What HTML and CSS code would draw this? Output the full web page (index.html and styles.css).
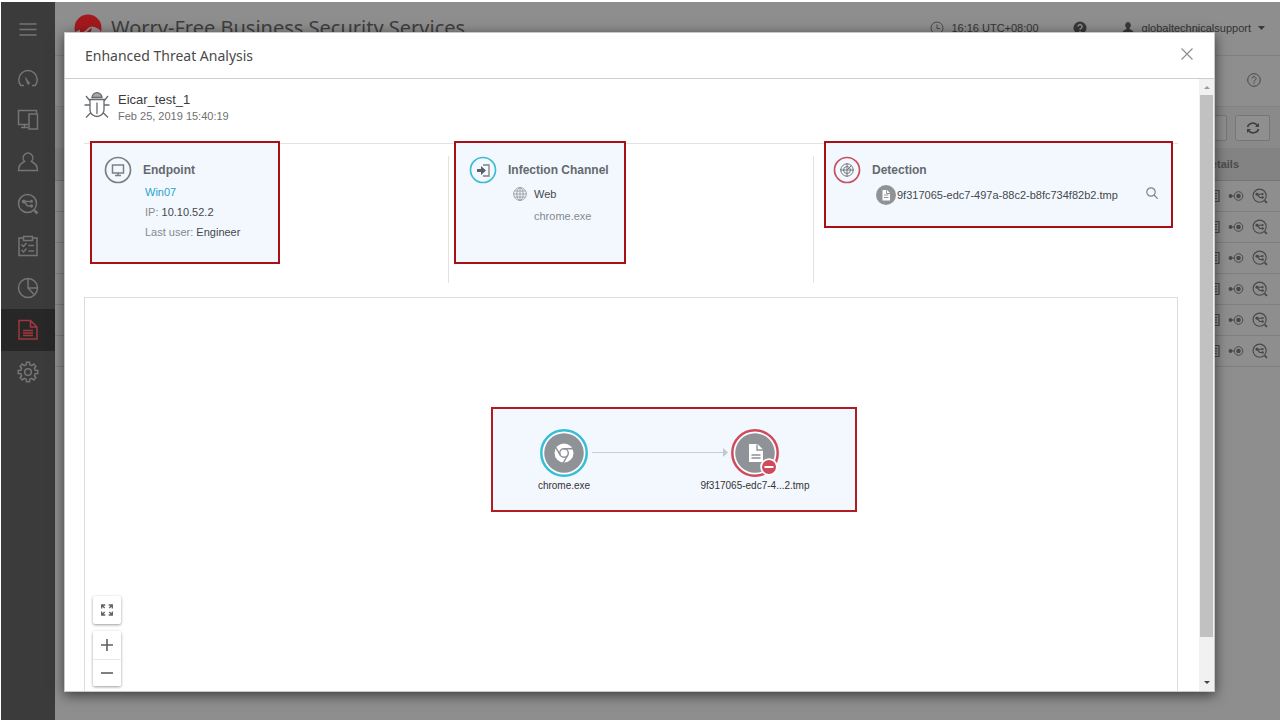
FILE: index.html
```html
<!DOCTYPE html>
<html lang="en">
<head>
<meta charset="utf-8">
<title>Worry-Free Business Security Services</title>
<link rel="stylesheet" href="styles.css">
</head>
<body>
<svg class="defs" aria-hidden="true">
  <symbol id="i-analysis" viewBox="0 0 22 22"><g fill="none" stroke="currentColor" stroke-width="1.500"><circle cx="10.500" cy="10.500" r="9"/><path d="M7 8.500h7.500M7 8.500l3.500 4.500h4"/><path d="M17.500 17.500l3 3" stroke-width="2.500"/></g><g fill="currentColor"><circle cx="6.800" cy="8.500" r="2"/><circle cx="14.500" cy="8.300" r="1.500"/><circle cx="14.500" cy="13" r="1.700"/></g></symbol>
  <symbol id="i-detail" viewBox="0 0 16 12"><g fill="none" stroke="currentColor"><circle cx="10.500" cy="6" r="4.300"/><path d="M2 6h4"/></g><g fill="currentColor"><circle cx="10.500" cy="6" r="2.300"/><circle cx="2.500" cy="6" r="1.900"/></g></symbol>
  <symbol id="i-list" viewBox="0 0 12 14"><path d="M1 1.500h10v11H1zM3 4.500h6M3 7h6M3 9.500h6" fill="none" stroke="currentColor" stroke-width="1.200"/></symbol>
</svg>
<div class="app">
  <nav class="sidebar" aria-label="Main">
    <button class="side-item side-menu" aria-label="Menu"><svg viewBox="0 0 22 22"><path d="M2.500 5h17M2.500 10.500h17M2.500 16h17"/></svg></button>
    <button class="side-item" aria-label="Dashboard"><svg viewBox="0 0 22 22"><path d="M7 18.500H3.800A9.200 9.200 0 1 1 18.200 18.500H15"/><path d="M8.500 10.500l2 6.500a1.200 1.200 0 0 0 2-1z" fill="currentColor" stroke-width="0.800"/></svg></button>
    <button class="side-item" aria-label="Devices"><svg viewBox="0 0 22 22"><path d="M11 15.500H1.500v-14h18V4M4 18.500h7M7.500 15.500v3M12 5h8.500v15H12z"/></svg></button>
    <button class="side-item" aria-label="Users"><svg viewBox="0 0 22 22"><path d="M7.500 10.500a4.800 5 0 1 1 7 0c3.500 1.500 6 4.500 6 9h-19c0-4.500 2.500-7.500 6-9z"/></svg></button>
    <button class="side-item" aria-label="Threat analysis"><svg><use href="#i-analysis"/></svg></button>
    <button class="side-item" aria-label="Policies"><svg viewBox="0 0 22 22"><path d="M6 3H2v17.500h18V3h-4M6.500 1.500h9v4h-9zM4.500 9.500l2 2 3-3.500M4.500 15l2 2 3-3.500M11.500 10.500H17M11.500 16H17"/></svg></button>
    <button class="side-item" aria-label="Reports"><svg viewBox="0 0 22 22"><circle cx="11" cy="11" r="9.500"/><path d="M11 1.500V11h9.500M11 11l6.500 7"/></svg></button>
    <button class="side-item side-active" aria-label="Logs"><svg viewBox="0 0 22 22"><path d="M13.500 1.500H2v18.500h18V8zM13.500 1.500V8H20M6 11.500h10M6 14h10M6 16.500h10"/></svg></button>
    <button class="side-item" aria-label="Settings"><svg viewBox="0 0 22 22"><path d="M9.200 3.800L9.500 1.300h3l.3 2.500 2 .8 2-1.500 2.100 2.100-1.500 2 .8 2 2.500.3v3l-2.500.3-.8 2 1.500 2-2.100 2.100-2-1.500-2 .8-.3 2.500h-3l-.3-2.500-2-.8-2 1.500-2.100-2.100 1.500-2-.8-2-2.500-.3v-3l2.500-.3.8-2-1.500-2 2.100-2.100 2 1.500z"/><circle cx="11" cy="11" r="3.300"/></svg></button>
  </nav>
  <main class="main">
    <header class="topbar">
      <svg class="logo" viewBox="0 0 28 28"><circle cx="14" cy="14" r="13.500" fill="#a3191d"/><path d="M1 18l5-2.500v3.500c6-1 7-5 10-6 4-1 7 1 10 3l1 3c-3-1-6-2-8 1-1 2-3 5-4 8-5 1-10-2-14-10z" fill="#939090"/><path d="M9 21c4-1 5-6 9-7l-3 9z" fill="#a3191d"/></svg>
      <h1 class="brand">Worry-Free Business Security Services</h1>
      <div class="status"><svg viewBox="0 0 14 14"><circle cx="7" cy="7" r="6"/><path d="M7 3.500V7.500h3"/></svg><span>16:16 UTC+08:00</span></div>
      <button class="help" aria-label="Help"><svg viewBox="0 0 14 14"><circle cx="7" cy="7" r="6.500" fill="#383838"/><path d="M5 5.500a2 2 0 1 1 3 1.800q-1 .5-1 1.400M7 10v1.400" fill="none" stroke="#8e8e8e" stroke-width="1.500"/></svg></button>
      <button class="account"><svg viewBox="0 0 14 14"><path d="M7 1a3 3.300 0 0 1 1.600 6v1.200c2 .7 4 1.300 4 3.800H1.400c0-2.500 2-3.100 4-3.800V7A3 3.300 0 0 1 7 1z" fill="#383838"/></svg><span>globaltechnicalsupport</span><svg class="caret" viewBox="0 0 7 4"><path d="M0 0h7L3.500 4z" fill="#383838"/></svg></button>
    </header>
    <div class="subbar"><button class="help" aria-label="Page help"><svg viewBox="0 0 14 14" fill="none" stroke="#484848"><circle cx="7" cy="7" r="6.300"/><path d="M5 5.500a2 2 0 1 1 3 1.800q-1 .5-1 1.400M7 9.600v1.200"/></svg></button></div>
    <div class="toolbar">
      <button class="tool" aria-label="Export"><svg viewBox="0 0 14 14"><path d="M3 2h6v10H3M3 7h5"/></svg></button>
      <button class="tool" aria-label="Refresh"><svg viewBox="0 0 14 14"><path d="M1.500 6A5.500 5 0 0 1 11.500 4.500M12.500 8A5.500 5 0 0 1 2.500 9.500"/><path d="M13 2v4H9zM1 12V8h4z" fill="#404040" stroke="none"/></svg></button>
    </div>
    <table class="logs">
      <thead><tr><th>Details</th></tr></thead>
      <tbody>
        <tr><td><div class="marks"><svg class="m-list"><use href="#i-list"/></svg><svg class="m-detail"><use href="#i-detail"/></svg><svg class="m-analysis"><use href="#i-analysis"/></svg></div></td></tr>
        <tr><td><div class="marks"><svg class="m-list"><use href="#i-list"/></svg><svg class="m-detail"><use href="#i-detail"/></svg><svg class="m-analysis"><use href="#i-analysis"/></svg></div></td></tr>
        <tr><td><div class="marks"><svg class="m-list"><use href="#i-list"/></svg><svg class="m-detail"><use href="#i-detail"/></svg><svg class="m-analysis"><use href="#i-analysis"/></svg></div></td></tr>
        <tr><td><div class="marks"><svg class="m-list"><use href="#i-list"/></svg><svg class="m-detail"><use href="#i-detail"/></svg><svg class="m-analysis"><use href="#i-analysis"/></svg></div></td></tr>
        <tr><td><div class="marks"><svg class="m-list"><use href="#i-list"/></svg><svg class="m-detail"><use href="#i-detail"/></svg><svg class="m-analysis"><use href="#i-analysis"/></svg></div></td></tr>
        <tr><td><div class="marks"><svg class="m-list"><use href="#i-list"/></svg><svg class="m-detail"><use href="#i-detail"/></svg><svg class="m-analysis"><use href="#i-analysis"/></svg></div></td></tr>
      </tbody>
    </table>
  </main>
</div>

<section class="modal" role="dialog" aria-labelledby="modal-title">
  <header class="modal-head">
    <h2 id="modal-title" class="modal-title">Enhanced Threat Analysis</h2>
    <button class="close" aria-label="Close"><svg viewBox="0 0 12 12"><path d="M.5.500l11 11M11.500.500l-11 11" stroke="#8c8c8c" stroke-width="1.100"/></svg></button>
  </header>
  <div class="modal-body">
    <div class="content">
      <div class="threat">
        <svg class="bug" viewBox="0 0 26 28" fill="none" stroke="#666a6e" stroke-width="1.300"><path d="M5.500 8.500h15M6 8.500V19a7 6.500 0 0 0 14 0V8.500M13 11.500V23M0.500 14h5.500M20 14h5.500M2 5l4 5M24 5l-4 5M2 26.500l5-5M24 26.500l-5-5"/><path d="M8 6.500a5 4.800 0 0 1 10 0z" fill="#a5a8aa"/></svg>
        <div>
          <h3 class="threat-name">Eicar_test_1</h3>
          <p class="threat-time">Feb 25, 2019 15:40:19</p>
        </div>
      </div>
      <div class="summary">
        <div class="col">
          <section class="mark mark-endpoint">
            <svg class="ring" viewBox="0 0 28 28" fill="none" stroke="#7b8087"><circle cx="14" cy="14" r="12.500" stroke-width="1.700"/><path d="M8.500 9h11v8h-11zM14 17v2.500M11 19.500h6" stroke-width="1.500"/></svg>
            <div class="info">
              <h4 class="label">Endpoint</h4>
              <p class="line"><a class="link" href="#">Win07</a></p>
              <p class="line">IP: <b class="value">10.10.52.2</b></p>
              <p class="line">Last user: <b class="value">Engineer</b></p>
            </div>
          </section>
        </div>
        <div class="col">
          <section class="mark mark-channel">
            <svg class="ring" viewBox="0 0 28 28" fill="none"><circle cx="14" cy="14" r="12.500" stroke="#3dbcd5" stroke-width="1.700"/><path d="M14 9h6v11h-6" stroke="#7b8087" stroke-width="1.300"/><path d="M8 13h4v-3l5 4.500-5 4.500v-3H8z" fill="#5a5f66"/></svg>
            <div class="info">
              <h4 class="label">Infection Channel</h4>
              <p class="line channel-line"><svg viewBox="0 0 14 14" fill="none" stroke="#8f949a" stroke-width="0.800"><circle cx="7" cy="7" r="6.400"/><ellipse cx="7" cy="7" rx="3.200" ry="6.400"/><path d="M7 .6v12.800M.6 7h12.800M1.500 4h11M1.500 10h11"/></svg><span class="value">Web</span></p>
              <p class="line channel-file">chrome.exe</p>
            </div>
          </section>
        </div>
        <div class="col">
          <section class="mark mark-detection">
            <svg class="ring" viewBox="0 0 28 28" fill="none"><circle cx="14" cy="14" r="12.500" stroke="#c9505f" stroke-width="1.700"/><g stroke="#737880"><circle cx="14" cy="14" r="6.200"/><circle cx="14" cy="14" r="3.500"/><path d="M14 7v14M7 14h14M14 14l4.500-4.500"/></g></svg>
            <div class="info">
              <h4 class="label">Detection</h4>
              <div class="file-row"><svg class="file-icon" viewBox="0 0 20 20"><circle cx="10" cy="10" r="10" fill="#8f9397"/><path d="M6.500 5h4.500l3 3v7.500H6.500z" fill="#fff"/><path d="M8 10h4.500M8 12.500h4.500M10.500 5.500v3H14" stroke="#8f9397" fill="none"/></svg><span class="value">9f317065-edc7-497a-88c2-b8fc734f82b2.tmp</span><button class="find" aria-label="Search file"><svg viewBox="0 0 12 12" fill="none" stroke="#7f8489" stroke-width="1.200"><circle cx="5" cy="5" r="4.200"/><path d="M8 8l3.700 3.700"/></svg></button></div>
            </div>
          </section>
        </div>
      </div>
      <div class="canvas">
        <div class="graph">
          <svg class="edge" viewBox="0 0 136 10" aria-hidden="true"><path d="M0 4.500h131" stroke="#c9cdd1"/><path d="M131 0l5 4.500-5 4.500z" fill="#c5c9cd"/></svg>
          <button class="node node-source"><svg viewBox="0 0 48 48"><circle cx="24" cy="24" r="22.700" fill="#fff" stroke="#37bdd6" stroke-width="2.500"/><circle cx="24" cy="24" r="19.800" fill="#8f9397"/><circle cx="24" cy="24" r="9.500" fill="#fff"/><circle cx="24" cy="24" r="4.300" fill="#fff" stroke="#8f9397" stroke-width="1.500"/><path d="M24 19.700h9M20.300 26.100l-4.600-7.800M27.700 26.100l-4.500 7.900" stroke="#8f9397" stroke-width="1.500"/></svg><span>chrome.exe</span></button>
          <button class="node node-target"><svg viewBox="0 0 48 48"><circle cx="24" cy="24" r="22.700" fill="#fff" stroke="#cf4a5b" stroke-width="2.500"/><circle cx="24" cy="24" r="19.800" fill="#8f9397"/><path d="M18 15h8.500l5.500 5.500V33H18z" fill="#fff"/><path d="M26 15.500V21h6M20.500 26h9M20.500 29h9" stroke="#8f9397" stroke-width="1.400" fill="none"/><circle cx="38" cy="38" r="7.900" fill="#cf4a5b" stroke="#fff" stroke-width="1.800"/><path d="M33.500 38h9" stroke="#fff" stroke-width="2"/></svg><span>9f317065-edc7-4...2.tmp</span></button>
        </div>
        <div class="controls">
          <button class="ctl" aria-label="Fit to screen"><svg viewBox="0 0 14 14" fill="none" stroke="#606060" stroke-width="1.300"><path d="M1.700 5.500V2h3.600M1.700 2l3 3M8.700 2h3.600v3.500M12.300 2l-3 3M1.700 8.500V12h3.600M1.700 12l3-3M12.300 8.500V12H8.700M12.300 12l-3-3"/></svg></button>
          <div class="zoom">
            <button class="ctl" aria-label="Zoom in"><svg viewBox="0 0 14 14" stroke="#606060" stroke-width="1.600"><path d="M1 7h12M7 1v12"/></svg></button>
            <button class="ctl" aria-label="Zoom out"><svg viewBox="0 0 14 14" stroke="#606060" stroke-width="1.600"><path d="M1 7h12"/></svg></button>
          </div>
        </div>
      </div>
    </div>
    <div class="scrollbar" aria-hidden="true">
      <svg viewBox="0 0 6 3"><path d="M0 3h6L3 0z" fill="#999"/></svg>
      <div class="thumb"></div>
      <svg viewBox="0 0 6 3"><path d="M0 0h6L3 3z" fill="#444"/></svg>
    </div>
  </div>
</section>
</body>
</html>
```
FILE: styles.css
```css
* { box-sizing: border-box; }
html, body { height: 100%; }
body { margin: 0; padding: 2px 0 0 1px; background: #fff; overflow: hidden; position: relative; font-family: "Liberation Sans", Arial, sans-serif; font-size: 11px; color: #333; }
h1, h2, h3, h4, p { margin: 0; font-weight: normal; }
button { margin: 0; padding: 0; border: 0; background: none; font: inherit; color: inherit; }
svg { display: block; flex: none; }
.defs { position: absolute; width: 0; height: 0; }

.app { display: flex; height: 100%; background: #8e8e8e; }
.sidebar { width: 54px; flex: none; background: #3b3b3b; color: #757575; display: flex; flex-direction: column; }
.side-item { height: 42px; display: flex; align-items: center; justify-content: center; }
.side-item svg { width: 22px; height: 22px; fill: none; stroke: currentColor; stroke-width: 1.5px; }
.side-item use { stroke: none; }
.side-menu { height: 55px; }
.side-active { background: #272727; color: #a0393f; }

.main { flex: 1; min-width: 0; }
.topbar { height: 54px; display: flex; align-items: center; padding: 0 15px 2px 19px; border-bottom: 1px solid #808080; color: #333; }
.logo { width: 28px; height: 28px; }
.brand { font-family: "Noto Sans", sans-serif; font-size: 20px; line-height: 24px; margin: 0 auto 0 9px; color: #3e3e3e; }
.status { display: flex; align-items: center; gap: 7px; }
.status svg { width: 14px; height: 14px; fill: none; stroke: #484848; }
.help svg { width: 14px; height: 14px; }
.topbar .help { margin: 0 34px; }
.account { display: flex; align-items: center; gap: 7px; }
.account svg { width: 14px; height: 14px; }
.account .caret { width: 7px; height: 4px; }
.subbar { height: 51px; display: flex; align-items: center; justify-content: flex-end; padding: 0 19px 2px 0; border-bottom: 1px solid #828282; }
.toolbar { height: 41px; display: flex; align-items: center; justify-content: flex-end; gap: 8px; padding-right: 10px; background: #8a8a8a; }
.tool { width: 35px; height: 26px; border: 1px solid #767676; border-radius: 2px; background: #8f8f8f; display: flex; align-items: center; justify-content: center; }
.tool svg { width: 14px; height: 14px; fill: none; stroke: #404040; stroke-width: 1.6px; }
.logs { width: 100%; border-collapse: collapse; }
.logs th { height: 32px; padding: 0 41px 0 0; text-align: right; color: #4c4c4c; background: #838383; border-bottom: 1px solid #757575; }
.logs td { height: 31px; padding: 0; border-bottom: 1px solid #7e7e7e; }
.marks { display: flex; justify-content: flex-end; align-items: center; padding-right: 12px; color: #484848; }
.m-list { width: 12px; height: 14px; margin-right: 8px; }
.m-detail { width: 16px; height: 12px; margin-right: 8px; }
.m-analysis { width: 16px; height: 16px; }

.modal { position: absolute; top: 32px; right: 65px; bottom: 28px; left: 64px; background: #fff; border: 1px solid #c8c8c8; box-shadow: 0 3px 12px rgba(0, 0, 0, .6); display: flex; flex-direction: column; }
.modal-head { height: 46px; flex: none; display: flex; align-items: center; justify-content: space-between; padding: 0 21px 0 20px; border-bottom: 1px solid #cfcfcf; }
.modal-title { font-family: "Noto Sans", sans-serif; font-size: 14px; line-height: 20px; color: #4a4a4a; }
.close svg { width: 12px; height: 12px; margin-bottom: 4px; }
.modal-body { flex: 1; min-height: 0; display: flex; }
.content { flex: 1; min-width: 0; display: flex; flex-direction: column; padding: 12px 21px 0 19px; }
.threat { display: flex; gap: 8px; height: 52px; flex: none; }
.bug { width: 26px; height: 28px; }
.threat-name { font-size: 13px; line-height: 18px; color: #3a3a3a; }
.threat-time { line-height: 14px; color: #707070; }

.summary { flex: none; display: grid; grid-template-columns: 364fr 365fr 365fr; padding: 12px 0 14px; border-top: 1px solid #e2e2e2; }
.col { height: 127px; border-left: 1px solid #e2e2e2; padding: 0 5px; }
.col:first-child { border-left-color: transparent; }
.col:last-child { padding-left: 10px; }
.mark { display: flex; gap: 11px; margin-top: -15px; padding: 13px 13px 0; border: 2px solid #a91016; background: #f3f8fe; color: #85898e; }
.mark-endpoint { width: 190px; height: 123px; padding-left: 12px; }
.mark-channel { width: 172px; height: 123px; }
.mark-detection { height: 87px; padding-left: 7px; }
.ring { width: 28px; height: 28px; }
.info { flex: 1; min-width: 0; }
.label { font-size: 12px; font-weight: bold; line-height: 28px; height: 26px; color: #65696e; white-space: nowrap; }
.line { line-height: 20px; padding-left: 2px; }
.value { font-weight: normal; color: #44484c; }
.link { color: #27a4cf; text-decoration: none; }
.channel-line { display: flex; align-items: center; gap: 7px; padding: 2px 0 0 5px; }
.channel-line svg { width: 14px; height: 14px; }
.channel-file { padding: 2px 0 0 26px; }
.file-row { display: flex; align-items: center; gap: 1px; padding: 3px 0 0 4px; line-height: 20px; }
.file-icon { width: 20px; height: 20px; }
.find { margin: 0 0 4px auto; }
.find svg { width: 12px; height: 12px; }

.canvas { position: relative; flex: 1; min-height: 0; border: 1px solid #dcdcdc; border-bottom: 0; }
.graph { position: absolute; top: 109px; left: 406px; width: 366px; height: 105px; border: 2px solid #b01c22; background: #f3f8fe; }
.edge { position: absolute; top: 39px; left: 99px; width: 136px; height: 10px; }
.node { position: absolute; top: 20px; width: 114px; display: flex; flex-direction: column; align-items: center; font-size: 10px; line-height: 18px; color: #333; white-space: nowrap; }
.node svg { width: 48px; height: 48px; }
.node-source { left: 14px; }
.node-target { left: 205px; }
.controls { position: absolute; left: 8px; bottom: 5px; display: flex; flex-direction: column; gap: 7px; }
.ctl { width: 28px; height: 28px; display: flex; align-items: center; justify-content: center; background: #fff; border-radius: 2px; }
.controls > .ctl, .zoom { box-shadow: 0 1px 3px rgba(0, 0, 0, .4); border-radius: 2px; }
.ctl svg { width: 14px; height: 14px; }
.zoom .ctl + .ctl { height: 27px; border-top: 1px solid #e8e8e8; }

.scrollbar { width: 15px; flex: none; background: #f1f1f1; display: flex; flex-direction: column; align-items: center; gap: 6px; padding: 7px 1px; }
.scrollbar svg { width: 6px; height: 3px; }
.thumb { width: 100%; flex: 1; margin-bottom: 38px; background: #c1c1c1; }
```
